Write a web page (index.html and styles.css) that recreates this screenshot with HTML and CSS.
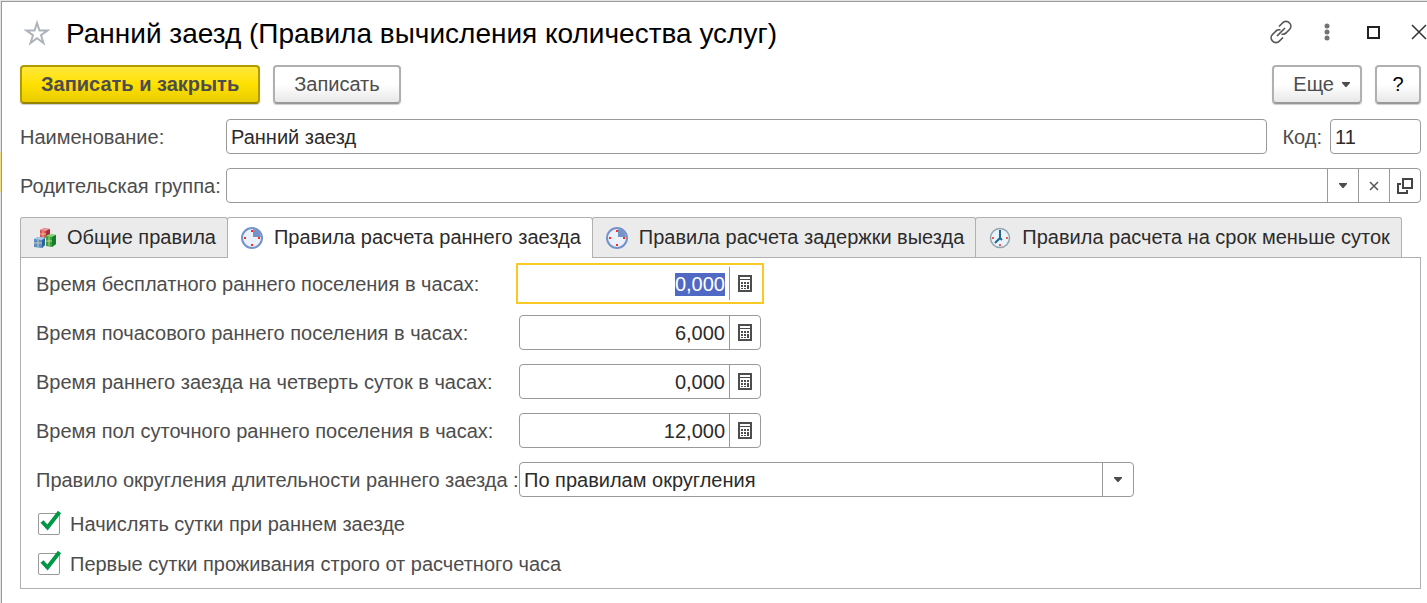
FILE: index.html
```html
<!DOCTYPE html>
<html lang="ru">
<head>
    <meta charset="UTF-8">
    <meta name="viewport" content="width=device-width, initial-scale=1.0">
    <title>Ранний заезд (Правила вычисления количества услуг)</title>
    <link rel="stylesheet" href="styles.css">
</head>
<body>

    <!-- Общие иконки -->
    <svg class="sprite" aria-hidden="true">
        <symbol id="icon-calc" viewBox="0 0 14 17">
            <rect x="1" y="1" width="12" height="15" fill="#fff" stroke="#4d4d4d" stroke-width="2"/>
            <path d="M2 4.500h10" stroke="#4d4d4d"/>
            <path d="M3 7h2v2H3zM6 7h2v2H6zM9 7h2v2H9zM3 10h2v2H3zM6 10h2v2H6zM3 13h2v1H3zM6 13h2v1H6zM9 10h2v4H9z" fill="#4d4d4d"/>
        </symbol>
        <symbol id="icon-arrow" viewBox="0 0 8 5">
            <path d="M0 0h8v1L4.500 5h-1L0 1z" fill="#4d4d4d"/>
        </symbol>
        <symbol id="icon-check" viewBox="0 0 24 24">
            <path d="M4 12.500l5.500 6L21.500 3" fill="none" stroke="#009846" stroke-width="4"/>
        </symbol>
        <symbol id="icon-quarter" viewBox="0 0 24 24">
            <circle cx="12" cy="12" r="10" fill="#eaf1fc" stroke="#7593c9" stroke-width="2"/>
            <path d="M13 11V3a8.500 8.500 0 0 1 8 8z" fill="#7593c9"/>
            <path d="M11 4h2v2h-2zM11 18h2v2h-2zM4 11h2v2H4zM18 11h2v2h-2z" fill="#ff2a1a"/>
        </symbol>
    </svg>

    <div class="window">
        <!-- Заголовок окна -->
        <header class="titlebar">
            <button class="icon-btn star" aria-label="В избранное">
                <svg width="26" height="26" viewBox="0 0 26 26"><path d="M13 3l2.500 7.500h8l-6.500 4.700 2.500 7.800-6.500-4.800L6.500 23 9 15.200 2.500 10.500h8z" fill="none" stroke="#adb3bb" stroke-width="2"/></svg>
            </button>
            <h1>Ранний заезд (Правила вычисления количества услуг)</h1>
            <div class="window-tools">
                <button class="icon-btn" aria-label="Получить ссылку">
                    <svg width="24" height="24" viewBox="0 0 24 24" fill="none" stroke="#555" stroke-width="1.700">
                        <path d="M10 6.500l3.500-3.500a4.600 4.600 0 0 1 7 0 4.600 4.600 0 0 1 0 6.500L17 13a4.600 4.600 0 0 1-4.500 1"/>
                        <path d="M14 17.500L10.500 21a4.600 4.600 0 0 1-7 0 4.600 4.600 0 0 1 0-6.500L7 11a4.600 4.600 0 0 1 4.500-1M8 16l8-8"/>
                    </svg>
                </button>
                <button class="icon-btn" aria-label="Меню">
                    <svg width="24" height="24" viewBox="0 0 24 24" fill="#737373"><circle cx="12" cy="6" r="2.500"/><circle cx="12" cy="12" r="2.500"/><circle cx="12" cy="18" r="2.500"/></svg>
                </button>
                <button class="icon-btn" aria-label="Развернуть">
                    <svg width="24" height="24" viewBox="0 0 24 24"><rect x="7" y="7" width="11" height="11" fill="none" stroke="#222" stroke-width="2"/></svg>
                </button>
                <button class="icon-btn" aria-label="Закрыть">
                    <svg width="24" height="24" viewBox="0 0 24 24"><path d="M5 5l14 14M19 5L5 19" stroke="#333" stroke-width="1.500"/></svg>
                </button>
            </div>
        </header>

        <!-- Командная панель -->
        <div class="toolbar">
            <button class="btn btn-primary">Записать и закрыть</button>
            <button class="btn">Записать</button>
            <button class="btn btn-more">Еще <svg width="8" height="5"><use href="#icon-arrow"/></svg></button>
            <button class="btn btn-help">?</button>
        </div>

        <div class="row">
            <label class="caption" for="name">Наименование:</label>
            <div class="field grow"><input type="text" id="name" value="Ранний заезд"></div>
            <label class="code-caption" for="code">Код:</label>
            <div class="field code"><input type="text" id="code" value="11"></div>
        </div>

        <div class="row">
            <label class="caption" for="parent">Родительская группа:</label>
            <div class="field grow">
                <input type="text" id="parent">
                <button aria-label="Выбрать из списка"><svg width="8" height="5"><use href="#icon-arrow"/></svg></button>
                <button aria-label="Очистить"><svg width="10" height="10" viewBox="0 0 10 10"><path d="M1 1l8 8M9 1L1 9" stroke="#555" stroke-width="1.500"/></svg></button>
                <button aria-label="Открыть"><svg width="16" height="16" viewBox="0 0 16 16" fill="none" stroke="#444" stroke-width="2"><rect x="6" y="1" width="9" height="9"/><path d="M4 6H1v9h9v-3"/></svg></button>
            </div>
        </div>

        <!-- Вкладки -->
        <div class="tabs" role="tablist">
            <button class="tab" role="tab" aria-selected="false">
                <svg width="24" height="24" viewBox="0 0 24 24">
                    <path d="M7 4l4-2 6 1v7l-4 2-6-1z" fill="#d9545a"/><path d="M7 4l4-2 6 1-4 2z" fill="#ee9a9a"/><path d="M13 5l4-2v7l-4 2z" fill="#a92d38"/>
                    <path d="M13 10l4-2 6 1v9l-4 3-6-1z" fill="#37a43f"/><path d="M13 10l4-2 6 1-4 2z" fill="#8fd77f"/><path d="M19 11l4-2v9l-4 3z" fill="#187d28"/>
                    <path d="M1 13l4-2 7 1v7l-3 3-8-1z" fill="#5c8fc6"/><path d="M1 13l4-2 7 1-3 2z" fill="#a9cbe8"/><path d="M9 14l3-2v7l-3 3z" fill="#2f629d"/>
                    <path d="M10 5v6M7 8h6M5 14v7M1 17h8M16 11v9M13 15h6" stroke="#f3dfa4" stroke-opacity=".7"/>
                </svg>
                Общие правила
            </button>
            <button class="tab active" role="tab" aria-selected="true">
                <svg width="24" height="24"><use href="#icon-quarter"/></svg>
                Правила расчета раннего заезда
            </button>
            <button class="tab" role="tab" aria-selected="false">
                <svg width="24" height="24"><use href="#icon-quarter"/></svg>
                Правила расчета задержки выезда
            </button>
            <button class="tab" role="tab" aria-selected="false">
                <svg width="24" height="24" viewBox="0 0 24 24">
                    <circle cx="12" cy="12" r="9.500" fill="#e9f2f8" stroke="#93a3ad" stroke-width="1.500"/>
                    <path d="M11 4h2v1h-2zM11 18h2v2h-2zM4 11h2v2H4zM18 11h2v2h-2z" fill="#e8604c"/>
                    <path d="M12 4v8l-5 5M12 12l2 2" fill="none" stroke="#1f6791" stroke-width="2"/>
                </svg>
                Правила расчета на срок меньше суток
            </button>
        </div>

        <div class="panel" role="tabpanel">
            <div class="row">
                <label class="caption" for="freeHours">Время бесплатного раннего поселения в часах:</label>
                <div class="field number current">
                    <input type="text" id="freeHours" value="0,000">
                    <button aria-label="Калькулятор"><svg width="14" height="17"><use href="#icon-calc"/></svg></button>
                </div>
            </div>
            <div class="row">
                <label class="caption" for="hourly">Время почасового раннего поселения в часах:</label>
                <div class="field number">
                    <input type="text" id="hourly" value="6,000">
                    <button aria-label="Калькулятор"><svg width="14" height="17"><use href="#icon-calc"/></svg></button>
                </div>
            </div>
            <div class="row">
                <label class="caption" for="quarterDay">Время раннего заезда на четверть суток в часах:</label>
                <div class="field number">
                    <input type="text" id="quarterDay" value="0,000">
                    <button aria-label="Калькулятор"><svg width="14" height="17"><use href="#icon-calc"/></svg></button>
                </div>
            </div>
            <div class="row">
                <label class="caption" for="halfDay">Время пол суточного раннего поселения в часах:</label>
                <div class="field number">
                    <input type="text" id="halfDay" value="12,000">
                    <button aria-label="Калькулятор"><svg width="14" height="17"><use href="#icon-calc"/></svg></button>
                </div>
            </div>
            <div class="row">
                <label class="caption" for="rounding">Правило округления длительности раннего заезда :</label>
                <div class="field dropdown">
                    <select id="rounding">
                        <option>По правилам округления</option>
                    </select>
                    <span class="dropdown-arrow"><svg width="8" height="5"><use href="#icon-arrow"/></svg></span>
                </div>
            </div>

            <div class="checks">
                <label class="check">
                    <span class="check-box">
                        <input type="checkbox" checked>
                        <svg width="24" height="24"><use href="#icon-check"/></svg>
                    </span>
                    Начислять сутки при раннем заезде
                </label>
                <label class="check">
                    <span class="check-box">
                        <input type="checkbox" checked>
                        <svg width="24" height="24"><use href="#icon-check"/></svg>
                    </span>
                    Первые сутки проживания строго от расчетного часа
                </label>
            </div>
        </div>
    </div>

    <script>
    // Первое поле сразу готово к вводу
    const first = document.getElementById("freeHours");
    first.focus();
    first.select();
    </script>

</body>
</html>
```

FILE: styles.css
```css
* {
    box-sizing: border-box;
}
body {
    margin: 0;
    padding: 1px 0 0 1px;
    min-height: 100vh;
    display: flex;
    background: linear-gradient(#e4e4e4 152px, #f3dc8c 152px, #f3dc8c 192px, #e4e4e4 192px);
    color: #4d4d4d;
    font-family: "Liberation Sans", Arial, sans-serif;
    font-size: 20px;
}
button, input, select {
    font: inherit;
    color: inherit;
    margin: 0;
    border-radius: 0;
}
button {
    padding: 0;
    border: none;
    background: none;
    cursor: pointer;
}
svg {
    display: block;
    flex: none;
}
.sprite {
    position: absolute;
    width: 0;
    height: 0;
}
.window {
    flex: 1;
    min-width: 0;
    padding: 0 6px 14px 18px;
    border-top: 1px solid #999;
    border-left: 1px solid #999;
    background: #fff;
}

/* Заголовок */
.titlebar {
    display: flex;
    align-items: center;
    height: 63px;
    margin-right: -12px;
    overflow: hidden;
}
.star {
    margin: 0 16px 2px 4px;
}
h1 {
    flex: 1;
    margin: 0;
    color: #000;
    font-size: 28px;
    font-weight: normal;
    white-space: nowrap;
}
.window-tools {
    display: flex;
    gap: 22px;
    margin: 0 2px 4px 0;
}

/* Кнопки команд */
.toolbar {
    display: flex;
    gap: 13px;
    margin-bottom: 15px;
}
.btn {
    height: 39px;
    padding: 0 19px;
    border: 2px solid #b0b0b0;
    border-bottom-color: #999;
    border-radius: 4px;
    background: linear-gradient(#fff 50%, #e8e8e8);
    box-shadow: 0 1px 1px #ccc;
}
.btn-primary {
    border-color: #b09a00;
    border-bottom-color: #968300;
    background: linear-gradient(#ffe83c, #ffe000 50%, #e8cc00);
    font-weight: bold;
}
.btn-more {
    display: flex;
    align-items: center;
    gap: 8px;
    margin-left: auto;
    padding-right: 10px;
}
.btn-help {
    width: 46px;
    padding: 0;
    color: #000;
}

/* Поля */
.row {
    display: flex;
    align-items: center;
    margin-bottom: 14px;
}
.caption, .code-caption {
    flex: none;
    padding-top: 2px;
    white-space: nowrap;
}
.caption {
    width: 206px;
}
.code-caption {
    margin: 0 8px 0 15px;
}
.field {
    display: flex;
    height: 35px;
    border: 1px solid #999;
    border-radius: 4px;
    background: #fff;
    color: #2b2b2b;
}
.field input, .field select {
    flex: 1;
    min-width: 0;
    width: 100%;
    padding: 0 4px;
    border: none;
    outline: none;
    background: none;
}
.field input {
    padding-top: 2px;
}
.field button, .dropdown-arrow {
    display: flex;
    flex: none;
    align-items: center;
    justify-content: center;
    width: 31px;
    border-left: 1px solid #999;
}
.grow {
    flex: 1;
}
.code {
    width: 91px;
}
.number {
    width: 242px;
}
.number input {
    text-align: right;
}
.current {
    border-color: transparent;
    outline: 2px solid #f9ca24;
    outline-offset: 1px;
    border-radius: 0;
}
.field input::selection {
    background: #5069c4;
    color: #fff;
}
.dropdown {
    display: grid;
    grid-template-columns: 1fr 31px;
    width: 615px;
}
.dropdown select {
    grid-area: 1 / 1 / 2 / 3;
    appearance: none;
}
.dropdown-arrow {
    grid-area: 1 / 2;
    pointer-events: none;
}

/* Вкладки */
.tabs {
    display: flex;
}
.tab {
    display: flex;
    align-items: center;
    gap: 10px;
    height: 40px;
    padding: 0 11px 0 12px;
    border: 1px solid #b0b0b0;
    border-bottom: none;
    border-radius: 3px 3px 0 0;
    background: #ebebeb;
    color: #2b2b2b;
    white-space: nowrap;
}
.tab + .tab {
    margin-left: -1px;
}
.tab.active {
    z-index: 1;
    height: 41px;
    margin-bottom: -1px;
    padding-bottom: 1px;
    background: #fff;
}
.panel {
    padding: 8px 15px 11px;
    border: 1px solid #b0b0b0;
}
.panel .caption {
    width: 483px;
}

/* Флажки */
.checks {
    display: flex;
    flex-direction: column;
    align-items: flex-start;
    gap: 16px;
    padding: 1px 2px;
}
.check {
    display: flex;
    align-items: center;
    gap: 10px;
    height: 24px;
}
.check-box {
    position: relative;
    width: 22px;
    height: 22px;
}
.check-box input {
    display: block;
    appearance: none;
    width: 22px;
    height: 22px;
    border: 1px solid #999;
    border-radius: 2px;
    background: #fff;
}
.check-box svg {
    position: absolute;
    top: -4px;
    left: 0;
    pointer-events: none;
}
.check-box input:not(:checked) + svg {
    display: none;
}
```
